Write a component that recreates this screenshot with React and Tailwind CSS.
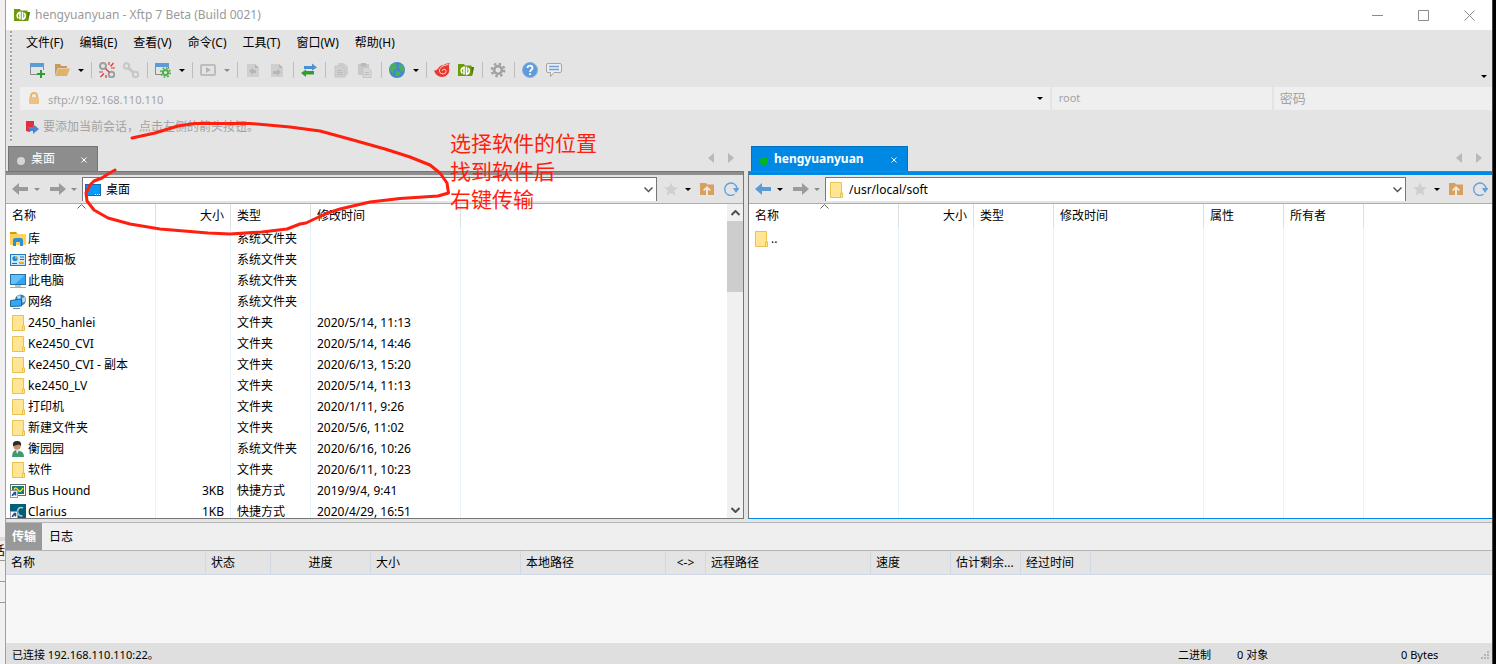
import { useState } from "react";

const MENUS = ["文件(F)", "编辑(E)", "查看(V)", "命令(C)", "工具(T)", "窗口(W)", "帮助(H)"];

const LOCAL_FILES = [
  { icon: "library", name: "库", type: "系统文件夹" },
  { icon: "control", name: "控制面板", type: "系统文件夹" },
  { icon: "computer", name: "此电脑", type: "系统文件夹" },
  { icon: "network", name: "网络", type: "系统文件夹" },
  { icon: "folder", name: "2450_hanlei", type: "文件夹", time: "2020/5/14, 11:13" },
  { icon: "folder", name: "Ke2450_CVI", type: "文件夹", time: "2020/5/14, 14:46" },
  { icon: "folder", name: "Ke2450_CVI - 副本", type: "文件夹", time: "2020/6/13, 15:20" },
  { icon: "folder", name: "ke2450_LV", type: "文件夹", time: "2020/5/14, 11:13" },
  { icon: "folder", name: "打印机", type: "文件夹", time: "2020/1/11, 9:26" },
  { icon: "folder", name: "新建文件夹", type: "文件夹", time: "2020/5/6, 11:02" },
  { icon: "user", name: "衡园园", type: "系统文件夹", time: "2020/6/16, 10:26" },
  { icon: "folder", name: "软件", type: "文件夹", time: "2020/6/11, 10:23" },
  { icon: "bushound", name: "Bus Hound", size: "3KB", type: "快捷方式", time: "2019/9/4, 9:41" },
  { icon: "clarius", name: "Clarius", size: "1KB", type: "快捷方式", time: "2020/4/29, 16:51" },
];

const REMOTE_FILES = [{ icon: "folder", name: ".." }];

const LOCAL_COLUMNS = [
  { key: "name", label: "名称", width: "w-[150px]" },
  { key: "size", label: "大小", width: "w-[75px]" },
  { key: "type", label: "类型", width: "w-[80px]" },
  { key: "time", label: "修改时间", width: "w-[150px]" },
];

const REMOTE_COLUMNS = [
  ...LOCAL_COLUMNS,
  { key: "attr", label: "属性", width: "w-[80px]" },
  { key: "owner", label: "所有者", width: "w-[80px]" },
];

const TRANSFER_COLUMNS = [
  { label: "名称", width: "w-[200px]" },
  { label: "状态", width: "w-[65px]" },
  { label: "进度", width: "w-[100px]", align: "text-center" },
  { label: "大小", width: "w-[150px]" },
  { label: "本地路径", width: "w-[145px]" },
  { label: "<->", width: "w-[40px]", align: "text-center" },
  { label: "远程路径", width: "w-[165px]" },
  { label: "速度", width: "w-[80px]" },
  { label: "估计剩余...", width: "w-[70px]" },
  { label: "经过时间", width: "w-[70px]" },
];

const ICONS = {
  xftp: (
    <>
      <path d="M0 2h6l1 1.500h6.500V5H16l-2 9H0z" fill="#6c9a0c" />
      <path d="M13.500 5H16l-2 9z" fill="#4f7805" />
      <path d="M6 12.500V5.200Q3.200 6 3.200 8.700q0 1.600 1.200 2.600" stroke="#fff" strokeWidth="1.600" fill="none" />
      <path d="M8.500 4.800v7.400q2.800-.6 2.800-3.500 0-1.600-1.200-2.600" stroke="#fff" strokeWidth="1.600" fill="none" />
    </>
  ),
  newWindow: (
    <>
      <path d="M.5 2v10.500H8M13.500 2v6" stroke="#8a8a8a" fill="none" />
      <path d="M0 1h14v4H0z" fill="#5c9bd5" />
      <path d="M11 8v8M7 12h8" stroke="#2ba12b" strokeWidth="2" />
    </>
  ),
  open: (
    <>
      <path d="M1 2h5l1.500 2H13v2H4L1 13z" fill="#c99a5a" />
      <path d="M4.500 6.500H16L13 14H1z" fill="#e2b26c" />
    </>
  ),
  unlink: (
    <>
      <circle cx="4" cy="4" r="3" stroke="#a0a0a0" strokeWidth="2" fill="none" />
      <circle cx="12.500" cy="12.500" r="2.800" stroke="#a0a0a0" strokeWidth="2" fill="none" />
      <path d="M10 0v3M14.500 1l-3 3.500M16 6h-4M0 10h4M1.500 15l3.500-3.500M7 16v-3M6.500 6.500l4 4" stroke="#e0333c" strokeWidth="1.200" />
    </>
  ),
  link: (
    <g stroke="#c6c6c6" strokeWidth="2" fill="none">
      <circle cx="3.500" cy="4" r="2.700" />
      <circle cx="12.500" cy="12.500" r="2.700" />
      <path d="M5 5.500l6 5.500" strokeWidth="3" />
    </g>
  ),
  settingsWindow: (
    <>
      <path d="M.5 2v10.500H6M13.500 2v5" stroke="#8a8a8a" fill="none" />
      <path d="M0 1h14v4H0z" fill="#5c9bd5" />
      <circle cx="10.500" cy="10.500" r="2.600" stroke="#4aae4a" strokeWidth="2" fill="none" />
      <circle cx="10.500" cy="10.500" r="4.600" stroke="#4aae4a" strokeWidth="1.600" strokeDasharray="1.800 1.810" fill="none" />
    </>
  ),
  play: (
    <>
      <rect x="1" y="3" width="14" height="10" rx="1" stroke="#bdbdbd" strokeWidth="2" fill="none" />
      <path d="M6 5l5 3-5 3z" fill="#b5b5b5" />
    </>
  ),
  docLeft: (
    <>
      <path d="M2 2h8l4 4v9H2z" fill="#cfcfcf" />
      <path d="M10 2v4h4M4 9l4-3v2h3v3H8v2z" fill="#b5b5b5" />
    </>
  ),
  docRight: (
    <>
      <path d="M2 2h8l4 4v9H2z" fill="#cfcfcf" />
      <path d="M10 2v4h4M12 10L8 7v2H4v3h4v2z" fill="#b5b5b5" />
    </>
  ),
  transfer: (
    <>
      <path d="M3 4h8V1.500L16 5.500l-5 3V7H3z" fill="#4d8fd3" />
      <path d="M13 9H5V7.500L0 11l5 4v-2.500h8z" fill="#2ca02c" />
    </>
  ),
  copy: (
    <>
      <path d="M5 1h6l4 4v8H5z" fill="#cdcdcd" />
      <path d="M2 4h6l4 4v7H2z" fill="#d0d0d0" stroke="#c4c4c4" />
      <path d="M4 8.500h5M4 10.500h6M4 12.500h6" stroke="#bcbcbc" />
    </>
  ),
  paste: (
    <>
      <path d="M1 2h11v11H1z" fill="#c8c8c8" />
      <path d="M4 1h5v3H4z" fill="#b8b8b8" />
      <path d="M6 5.500h5l3 3v7H6z" fill="#d8d8d8" stroke="#c4c4c4" />
      <path d="M8 10.500h4M8 12.500h4" stroke="#bcbcbc" />
    </>
  ),
  globe: (
    <>
      <circle cx="8" cy="8" r="8" fill="#4787cd" />
      <path d="M2 3l3-2 3 1-1 2 1 2-3 2-1 3-2-1L.500 7zM10 2l4 1.500L16 8l-2 2-2-1-2-3zM7 9l4 1 .5 2L9 15l-2-2z" fill="#49b05c" />
    </>
  ),
  xshell: (
    <>
      <path d="M0 8.500Q2.500 9 4 6.500 6 3 9.500 3 11.500.800 16 1.200 14.500 2.500 15 5.500 16 10 13.500 12.500 11.500 15 8 15 2 15 0 8.500z" fill="#e8392f" />
      <path d="M14.500 2.500Q10.500 3 8 4.500 5 6.500 5.300 9q.7 3 3.700 3 3-.2 3.200-2.700-.2-2-2.200-2.100-1.700.1-1.800 1.600" stroke="#f4d4d0" strokeWidth="1" fill="none" />
    </>
  ),
  gear: (
    <>
      <circle cx="8" cy="8" r="3.800" stroke="#a0a0a0" strokeWidth="2.600" fill="none" />
      <circle cx="8" cy="8" r="6.200" stroke="#a0a0a0" strokeWidth="2.400" strokeDasharray="2.430 2.439" fill="none" />
    </>
  ),
  help: (
    <>
      <circle cx="8" cy="8" r="7.500" fill="#5f9bd8" stroke="#86aede" />
      <path d="M5.500 6c0-3.300 5-3.200 5 0 0 1.800-2.400 1.700-2.400 4M8.100 11.300v1.700" stroke="#fff" strokeWidth="1.800" fill="none" />
    </>
  ),
  chat: (
    <>
      <path d="M2 1.500h12q1.500 0 1.500 1.500v6q0 1.500-1.500 1.500H8L4.500 14.500v-4H2Q.500 10.500.5 9V3Q.500 1.500 2 1.500z" fill="#eee" stroke="#a5a5a5" />
      <path d="M3 4.500h10M3 7.500h10" stroke="#6fa3dc" strokeWidth="1.500" />
    </>
  ),
  lock: (
    <>
      <path d="M5 7V5q0-3 3-3t3 3v2" stroke="#e5b66f" strokeWidth="2" fill="none" />
      <rect x="3" y="6" width="10" height="7" rx="1" fill="#ecc182" />
    </>
  ),
  bookmark: (
    <>
      <path d="M2 2h8v4L6 13l-4-1z" fill="#dd3142" />
      <path d="M4 8h5V5l6 5-6 5v-3H6z" fill="#4a86d0" />
    </>
  ),
  star: <path d="M8 1.500l2 4.500 5 .4-3.800 3.200 1.200 4.900L8 11.900l-4.400 2.600 1.200-4.900L1 6.400 6 6z" fill="#cfcfcf" />,
  folderUp: (
    <>
      <path d="M1 2h6l1 1.500h7V14H1z" fill="#d7a05f" />
      <path d="M8 5l4 4-1.200 1L9 8.500V14H7V8.500L5.200 10 4 9z" fill="#f4e9dc" />
    </>
  ),
  refresh: (
    <>
      <path d="M11.500 13.200A6.200 6.200 0 1 1 14 7.500" stroke="#65a0da" strokeWidth="1.400" fill="none" />
      <path d="M10 7h6.500L13 12z" fill="#65a0da" />
    </>
  ),
  folder: (
    <>
      <path d="M2.500.5H13.500v10.500h1v4.500H2.500z" fill="#ffe594" stroke="#e9c34d" />
      <path d="M12.500 15v-4h2" fill="none" stroke="#e9c34d" />
    </>
  ),
  library: (
    <>
      <path d="M0 1h6l2 2h8v11H0z" fill="#fdd25a" />
      <path d="M0 1h6l1 2H0z" fill="#d99a10" />
      <path d="M3 15V9.500Q3 7 5.500 7h5Q13 7 13 9.500V15h-3v-4H6v4z" fill="#2f8fd6" />
    </>
  ),
  control: (
    <>
      <rect x=".5" y="2.500" width="15" height="11" fill="#c9e9fb" stroke="#2d78b0" />
      <circle cx="5" cy="6.500" r="2.600" fill="#1c8bd6" />
      <path d="M5 6.500V4a2.500 2.500 0 0 1 2.500 2.500z" fill="#f5a623" />
      <path d="M10 5h4M10 7.500h4M2 11.500h5" stroke="#1c6fae" />
      <path d="M9 11h5" stroke="#f5a623" strokeWidth="2" />
    </>
  ),
  computer: (
    <>
      <rect x=".5" y="1.500" width="15" height="10" fill="#2fa5f5" stroke="#2d6fa0" />
      <path d="M1 2h14L5 11H1z" fill="#5fc0fb" />
      <path d="M5 13h6" stroke="#6b8ba3" />
      <path d="M0 14.500h16" stroke="#9aaebc" />
    </>
  ),
  network: (
    <>
      <circle cx="10.500" cy="6" r="5.500" fill="#3d82b5" />
      <path d="M7 2l3-1 1 3-3 2zM12 4l3-1 .5 4-3 2z" fill="#b6dcee" />
      <path d="M.5 6.500l11-1.500v7l-11 .5z" fill="#33a8f4" stroke="#22648f" />
      <path d="M3 14.500h7" stroke="#6b8ba3" />
    </>
  ),
  user: (
    <>
      <path d="M2 16q0-6 4-7l4 1q4 1 4 6z" fill="#3f9a72" />
      <circle cx="7" cy="5" r="3.700" fill="#c98f6a" />
      <path d="M3 5Q2 0 7 0t4 5L9 3.500z" fill="#2f2a28" />
      <path d="M6 9l1 4 2-3.500z" fill="#e8f3ee" />
    </>
  ),
  bushound: (
    <>
      <rect x=".5" y="1.500" width="15" height="11" fill="#fff" stroke="#6a6a6a" />
      <path d="M2 3h12v8H2z" fill="#0d7f78" />
      <path d="M4 6.500q2-3 4 .5t5-2" stroke="#f4e234" strokeWidth="1.500" fill="none" />
      <rect x=".5" y="7.500" width="7" height="7" fill="#fff" stroke="#9c9c9c" />
      <path d="M2.500 13q0-2.500 3-2.500M3.500 9.500h2v3" stroke="#1f4e9c" strokeWidth="1.500" fill="none" />
    </>
  ),
  clarius: (
    <>
      <path d="M0 0h16v16H0z" fill="#035c78" />
      <path d="M13 4Q9 2 7.500 7q0 5 5 5" stroke="#9fd0dc" strokeWidth="1.500" fill="none" />
      <rect x=".5" y="7.500" width="7" height="7" fill="#fff" stroke="#9c9c9c" />
      <path d="M2.500 13q0-2.500 3-2.500M3.500 9.500h2v3" stroke="#1f4e9c" strokeWidth="1.500" fill="none" />
    </>
  ),
  desktop: (
    <>
      <rect x=".5" y="2.500" width="15" height="11" fill="#0a97f5" stroke="#0a6db5" />
      <path d="M10 12.500h1M12 12.500h1M14 12.500h1" stroke="#fff" />
    </>
  ),
};

const Icon = ({ name }) => (
  <svg width="16" height="16" viewBox="0 0 16 16" className="shrink-0" aria-hidden="true">
    {ICONS[name]}
  </svg>
);

const Caret = ({ muted }) => (
  <svg width="6" height="3" viewBox="0 0 6 3" aria-hidden="true">
    <path d="M0 0h6L3 3z" fill={muted ? "#8c8c8c" : "#000"} />
  </svg>
);

const ToolButton = ({ icon, label }) => (
  <button aria-label={label} className="flex w-6 h-6 items-center justify-center">
    <Icon name={icon} />
  </button>
);

const CaretButton = ({ label, muted }) => (
  <button aria-label={label} className="flex w-[13px] h-6 items-center justify-center">
    <Caret muted={muted} />
  </button>
);

const Separator = () => (
  <div className="flex w-2 justify-center">
    <div className="w-px h-4 bg-[#bdbdbd]" />
  </div>
);

const Grip = () => (
  <div className="w-[2px] my-px bg-[repeating-linear-gradient(to_bottom,#a6a6a6_0_2px,#f4f4f4_2px_3px,transparent_3px_4px)]" />
);

const TitleBar = () => (
  <header className="flex h-[30px] items-center bg-white pl-2 text-[#9a9a9a]">
    <Icon name="xftp" />
    <h1 className="pl-[5px] text-xs">hengyuanyuan - Xftp 7 Beta (Build 0021)</h1>
    <div className="ml-auto flex text-[#8c8c8c]">
      <button aria-label="最小化" className="flex w-[46px] h-7 items-center justify-center">
        <svg width="11" height="11" stroke="currentColor"><path d="M0 5.500h11" /></svg>
      </button>
      <button aria-label="最大化" className="flex w-[46px] h-7 items-center justify-center">
        <svg width="11" height="11" stroke="currentColor" fill="none"><path d="M.5.500h10v10H.500z" /></svg>
      </button>
      <button aria-label="关闭" className="flex w-[46px] h-7 items-center justify-center">
        <svg width="11" height="11" stroke="currentColor"><path d="M.5.500l10 10M10.500.500l-10 10" /></svg>
      </button>
    </div>
  </header>
);

const Toolbar = () => (
  <div className="flex h-7 items-center pl-[6px]">
    <ToolButton icon="newWindow" label="新建" />
    <ToolButton icon="open" label="打开" />
    <CaretButton label="打开选项" />
    <Separator />
    <ToolButton icon="unlink" label="断开" />
    <ToolButton icon="link" label="重新连接" />
    <Separator />
    <ToolButton icon="settingsWindow" label="属性" />
    <CaretButton label="属性选项" />
    <Separator />
    <ToolButton icon="play" label="运行" />
    <CaretButton label="运行选项" muted />
    <Separator />
    <ToolButton icon="docLeft" label="下载" />
    <ToolButton icon="docRight" label="上传" />
    <Separator />
    <ToolButton icon="transfer" label="同步" />
    <Separator />
    <ToolButton icon="copy" label="复制" />
    <ToolButton icon="paste" label="粘贴" />
    <Separator />
    <ToolButton icon="globe" label="编码" />
    <CaretButton label="编码选项" />
    <Separator />
    <ToolButton icon="xshell" label="Xshell" />
    <ToolButton icon="xftp" label="Xftp" />
    <Separator />
    <ToolButton icon="gear" label="选项" />
    <Separator />
    <ToolButton icon="help" label="帮助" />
    <ToolButton icon="chat" label="反馈" />
    <button aria-label="更多" className="ml-auto mr-1 flex w-[8px] h-4 self-end items-center justify-center">
      <Caret />
    </button>
  </div>
);

const AddressBar = () => (
  <div className="mt-[3px] grid h-[23px] grid-cols-[1029fr_220fr_218fr] gap-[2px] text-[#a3a3a3]">
    <div className="flex min-w-0 items-center bg-[#efefef] pl-[6px]">
      <Icon name="lock" />
      <input
        aria-label="地址"
        className="min-w-0 flex-1 pl-[6px] pt-[3px] text-[11px] placeholder-[#a3a3a3] outline-none"
        placeholder="sftp://192.168.110.110"
      />
      <button aria-label="历史地址" className="flex w-5 h-5 items-center justify-center">
        <Caret />
      </button>
    </div>
    <input
      aria-label="用户名"
      className="min-w-0 bg-[#efefef] pl-[7px] text-[11px] placeholder-[#a3a3a3] outline-none"
      placeholder="root"
    />
    <input
      aria-label="密码"
      type="password"
      className="min-w-0 bg-[#efefef] pl-[6px] text-[13px] placeholder-[#a3a3a3] outline-none"
      placeholder="密码"
    />
  </div>
);

const PathBar = ({ path, icon, active }) => {
  const [value, setValue] = useState(path);
  return (
    <div className="flex h-[29px] shrink-0 items-center border-b border-[#adadad] bg-[#e4e4e4]">
      <div className="flex w-[76px] items-center pl-[6px]">
        <button aria-label="后退" className="flex w-4 h-6 items-center">
          <svg width="16" height="12" viewBox="0 0 16 12"><path d="M0 6l7-6v4h9v4H7v4z" fill={active ? "#5b9bd5" : "#9b9b9b"} /></svg>
        </button>
        <button aria-label="后退历史" className="flex w-[22px] h-6 items-center justify-center pr-1">
          <Caret muted={!active} />
        </button>
        <button aria-label="前进" className="flex w-4 h-6 items-center">
          <svg width="16" height="12" viewBox="0 0 16 12"><path d="M16 6L9 0v4H0v4h9v4z" fill="#9b9b9b" /></svg>
        </button>
        <button aria-label="前进历史" className="flex w-4 h-6 items-center justify-center">
          <Caret muted />
        </button>
      </div>
      <div className="flex h-6 min-w-0 flex-1 items-center border-x border-t border-[#777] bg-white pl-[2px]">
        <Icon name={icon} />
        <input
          aria-label="路径"
          className="min-w-0 flex-1 pl-[5px] text-xs outline-none"
          value={value}
          onChange={(e) => setValue(e.target.value)}
        />
        <button aria-label="展开路径" className="flex w-4 h-5 items-center justify-center">
          <svg width="9" height="6" fill="none" stroke="#555" strokeWidth="1.500"><path d="M.5.500l4 4 4-4" /></svg>
        </button>
      </div>
      <div className="flex w-[86px] items-center pl-[6px]">
        <button aria-label="收藏"><Icon name="star" /></button>
        <button aria-label="收藏选项" className="flex w-[18px] h-6 items-center justify-center"><Caret /></button>
        <button aria-label="上级目录" className="w-[26px] pl-[2px]"><Icon name="folderUp" /></button>
        <button aria-label="刷新"><Icon name="refresh" /></button>
      </div>
    </div>
  );
};

const FileTable = ({ columns, files }) => (
  <table className="w-full min-w-0 flex-1 table-fixed border-separate border-spacing-0 text-xs">
    <thead>
      <tr className="h-6">
        {columns.map((col) => (
          <th
            key={col.key}
            className={`${col.width} relative border-r border-[#e0e0e0] px-[6px] font-normal ${col.key === "size" ? "text-right" : "text-left"}`}
          >
            {col.label}
            {col.key === "name" && (
              <svg width="9" height="5" className="absolute top-0 left-[71px]" fill="none" stroke="#666">
                <path d="M.5 4.500l4-4 4 4" />
              </svg>
            )}
          </th>
        ))}
        <th aria-label="空白" />
      </tr>
    </thead>
    <tbody>
      {files.map((file) => (
        <tr key={file.name} className="h-[21px]">
          {columns.map((col) => (
            <td
              key={col.key}
              className={`border-r border-[#e8f2fb] whitespace-nowrap ${col.key === "name" ? "pl-1" : "px-[6px]"} ${col.key === "size" ? "text-right" : ""}`}
            >
              {col.key === "name" ? (
                <span className="flex items-center gap-[2px]">
                  <Icon name={file.icon} />
                  {file.name}
                </span>
              ) : (
                file[col.key]
              )}
            </td>
          ))}
          <td />
        </tr>
      ))}
      {/* filler keeps the column lines running to the bottom */}
      <tr>
        {columns.map((col) => (
          <td key={col.key} className="border-r border-[#e8f2fb]" />
        ))}
        <td />
      </tr>
    </tbody>
  </table>
);

const ScrollBar = () => (
  <div className="flex w-4 shrink-0 flex-col bg-[#f0f0f0]">
    <button aria-label="向上滚动" className="flex h-[17px] items-center justify-center">
      <svg width="9" height="6" fill="none" stroke="#505050" strokeWidth="2"><path d="M.5 5l4-4 4 4" /></svg>
    </button>
    <div className="h-[71px] bg-[#cdcdcd]" />
    <button aria-label="向下滚动" className="mt-auto flex h-[17px] items-center justify-center">
      <svg width="9" height="6" fill="none" stroke="#505050" strokeWidth="2"><path d="M.5 1l4 4 4-4" /></svg>
    </button>
  </div>
);

const TabArrows = () => (
  <div className="ml-auto mr-[10px] flex items-center gap-[14px]">
    <button aria-label="上一个标签">
      <svg width="6" height="10"><path d="M6 0v10L0 5z" fill="#b9b9b9" /></svg>
    </button>
    <button aria-label="下一个标签">
      <svg width="6" height="10"><path d="M0 0v10l6-5z" fill="#b9b9b9" /></svg>
    </button>
  </div>
);

const CloseMark = () => (
  <svg width="6" height="6" stroke="#fff"><path d="M.5.500l5 5M5.500.500l-5 5" /></svg>
);

const LocalPane = () => (
  <section className="flex min-w-0 grow-[738] basis-0 flex-col">
    <div className="flex h-[27px] shrink-0 items-end">
      <div className="ml-[2px] flex w-[90px] h-[25px] items-center border border-b-0 border-[#757575] bg-[#8d8d8d] pl-2 pr-[10px] text-xs text-white">
        <span className="mt-[3px] mr-[6px] size-2 rounded-full bg-[#d5d5d5]" />
        <button className="mr-auto">桌面</button>
        <button aria-label="关闭桌面" className="pt-[2px]"><CloseMark /></button>
      </div>
      <div className="flex h-full flex-1 items-center"><TabArrows /></div>
    </div>
    <div className="flex min-h-0 flex-1 flex-col border-r border-b border-[#777]">
      <div className="h-1 shrink-0 border-t border-[#757575] bg-[#8d8d8d]" />
      <PathBar path="桌面" icon="desktop" />
      <div className="flex min-h-0 flex-1 overflow-hidden bg-white">
        <FileTable columns={LOCAL_COLUMNS} files={LOCAL_FILES} />
        <ScrollBar />
      </div>
    </div>
  </section>
);

const RemotePane = () => (
  <section className="flex min-w-0 grow-[744] basis-0 flex-col">
    <div className="flex h-[27px] shrink-0 items-end">
      <div className="ml-[3px] flex w-[157px] h-[25px] items-center border border-b-0 border-[#0072c0] bg-[#0089e4] pl-2 pr-[10px] text-xs text-white">
        <span className="mt-[3px] mr-[6px] size-2 rounded-full bg-[#00b818]" />
        <button className="mr-auto font-bold">hengyuanyuan</button>
        <button aria-label="关闭 hengyuanyuan" className="pt-[2px]"><CloseMark /></button>
      </div>
      <div className="flex h-full flex-1 items-center"><TabArrows /></div>
    </div>
    <div className="flex min-h-0 flex-1 flex-col border-b border-l border-b-[#0089e4] border-l-[#777]">
      <div className="h-1 shrink-0 border-t border-[#757575] bg-[#0089e4]" />
      <PathBar path="/usr/local/soft" icon="folder" active />
      <div className="flex min-h-0 flex-1 overflow-hidden bg-white">
        <FileTable columns={REMOTE_COLUMNS} files={REMOTE_FILES} />
      </div>
    </div>
  </section>
);

const TransferPane = () => {
  const [tab, setTab] = useState("传输");
  return (
    <section className="mt-[3px] shrink-0 border-t border-[#b5b5b5] bg-[#f7f7f7]">
      <div className="flex h-7 border-b border-[#b5b5b5] bg-[#efefef] text-xs">
        {["传输", "日志"].map((t) => (
          <button
            key={t}
            onClick={() => setTab(t)}
            className={tab === t ? "w-9 bg-[#999] font-bold text-white" : "w-[38px]"}
          >
            {t}
          </button>
        ))}
      </div>
      <div className="h-[92px]">
        <table className="w-full table-fixed border-separate border-spacing-0 text-xs">
          <thead>
            <tr className="h-6 bg-[#e4e4e4]">
              {TRANSFER_COLUMNS.map((col) => (
                <th
                  key={col.label}
                  className={`${col.width} border-r border-b border-[#cfd8e4] font-normal whitespace-nowrap ${col.align || "pl-[5px] text-left"}`}
                >
                  {col.label}
                </th>
              ))}
              <th aria-label="空白" className="border-b border-[#cfd8e4]" />
            </tr>
          </thead>
        </table>
      </div>
    </section>
  );
};

const StatusBar = () => (
  <footer className="flex h-[21px] shrink-0 items-center bg-[#dfdfdf] pt-[3px] pl-[6px] text-[11px]">
    <span>已连接 192.168.110.110:22。</span>
    <span className="ml-auto w-[59px]">二进制</span>
    <span className="w-[164px]">0 对象</span>
    <span className="w-[80px]">0 Bytes</span>
    <svg width="9" height="9" className="mr-[2px]" fill="#b4b4b4">
      <path d="M6 0h2v2H6zM6 3h2v2H6zM3 3h2v2H3zM6 6h2v2H6zM3 6h2v2H3zM0 6h2v2H0z" />
    </svg>
  </footer>
);

// slice of the window that lies behind on the left
const BackWindow = () => (
  <div className="flex w-[5px] shrink-0 flex-col justify-end overflow-hidden bg-[#f1f1f1]">
    <div className="h-1 bg-[#dcdcdc]" />
    <div className="flex h-5 items-center justify-end border-b border-[#999] text-xs">话</div>
    <div className="h-[21px] border-b border-[#999]" />
    <div className="h-[21px] border-b border-[#999]" />
    <div className="h-[61px]" />
  </div>
);

// hand-drawn note laid over the window
const Annotation = () => (
  <div className="pointer-events-none absolute inset-0 overflow-hidden">
    <svg width="460" height="240" fill="none" stroke="#ff1f0f" strokeWidth="3" strokeLinecap="round" strokeLinejoin="round">
      <path d="M132 138L155 133L178 126L195 123.500L250 123.500L290 127L320 131L353 140L385 149L410 157L430 165L440 173L447 183L448.500 193L438 196L400 198.500L370 202L340 209L325 214L306 223L300 224L287 229L262 232L230 234L208 233L160 229L130 224L108 218L94 210L87 201L86 193L90 185L94 181L102 178L108 174L115 170" />
    </svg>
    <p className="absolute top-[129px] left-[450px] text-[21px] leading-7 text-[#ff1f0f]">
      选择软件的位置
      <br />
      找到软件后
      <br />
      右键传输
    </p>
  </div>
);

const App = () => {
  return (
    <div className="relative flex h-screen overflow-hidden bg-[#e4e4e4] font-['Noto_Sans','Noto_Sans_CJK_SC',sans-serif] text-black">
      <BackWindow />
      <main className="flex min-w-0 flex-1 flex-col border-l border-[#a0a0a0]">
        <TitleBar />
        <div className="flex shrink-0 pl-1">
          <Grip />
          <div className="min-w-0 flex-1 pl-2">
            <nav className="flex h-[26px] items-center gap-4 pl-[6px] text-xs">
              {MENUS.map((menu) => (
                <button key={menu}>{menu}</button>
              ))}
            </nav>
            <Toolbar />
            <AddressBar />
            <div className="flex h-[34px] items-center pl-1 text-xs text-[#a3a3a3]">
              <Icon name="bookmark" />
              <p className="pl-[3px]">要添加当前会话，点击左侧的箭头按钮。</p>
            </div>
          </div>
        </div>
        <div className="flex min-h-0 flex-1 gap-1">
          <LocalPane />
          <RemotePane />
        </div>
        <TransferPane />
        <StatusBar />
      </main>
      <div className="w-1 shrink-0 border-l border-[#444] bg-black" />
      <Annotation />
    </div>
  );
};

export default App;
